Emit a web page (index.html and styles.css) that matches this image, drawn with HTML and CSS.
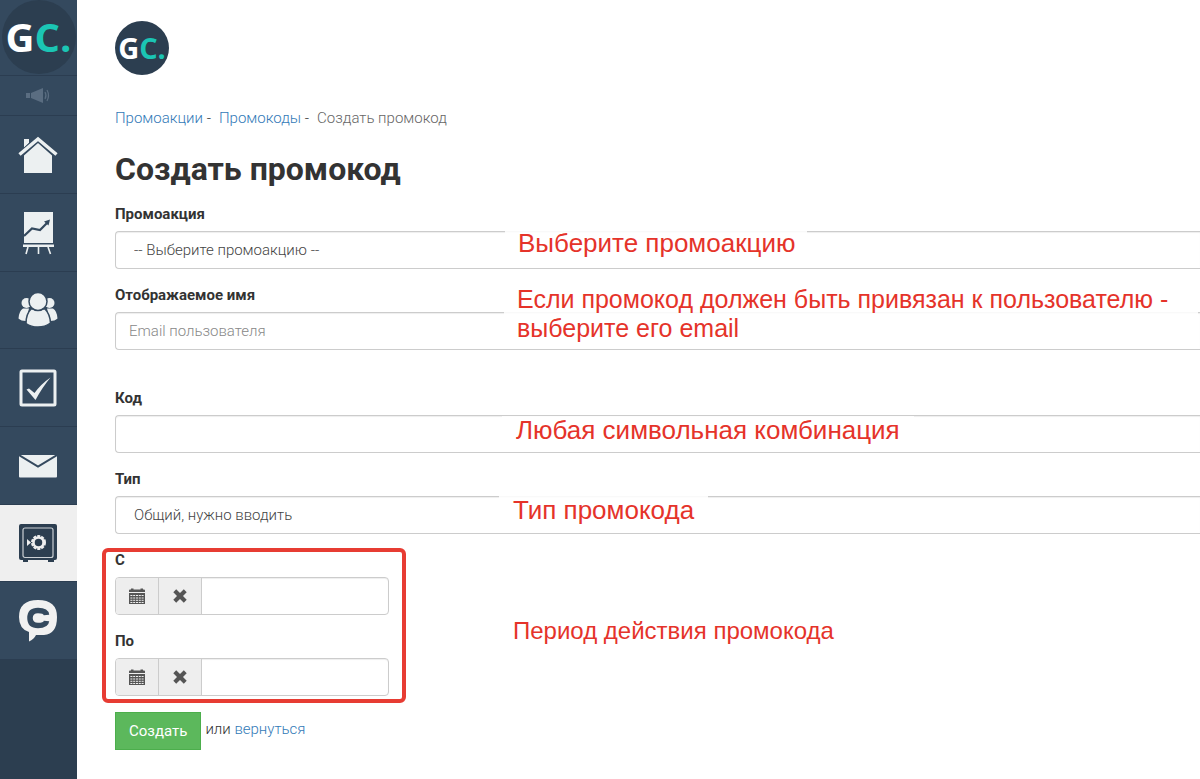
FILE: index.html
```
<!DOCTYPE html>
<html lang="ru">
<head>
<meta charset="utf-8">
<title>Создать промокод</title>
<meta name="viewport" content="width=device-width, initial-scale=1">
<link rel="stylesheet" href="styles.css">
</head>
<body>
<svg class="defs" aria-hidden="true">
  <symbol id="calendar" viewBox="0 0 16 16">
    <path fill="currentColor" d="M0 4V2.500Q0 1.500 1 1.500H2V.5H4.500V1.500H11.500V.5H14V1.500H15Q16 1.500 16 2.500V4ZM0 5H16V16H0Z"/>
    <path stroke="#eee" stroke-width="1" stroke-dasharray="2 .8" d="M1.400 7.500H15M1.400 10H15M1.400 12.300H15M1.400 14.500H15" fill="none"/>
  </symbol>
  <symbol id="cross" viewBox="0 0 14 14">
    <path fill="currentColor" d="M3.200.3 7 4 10.800.3 13.700 3.200 10 7 13.700 10.800 10.800 13.700 7 10 3.200 13.700.3 10.800 4 7 .3 3.200Z"/>
  </symbol>
</svg>
<div class="layout">
  <nav class="sidebar" aria-label="Главное меню">
    <a class="side-logo" href="#"><span class="logo logo-large">G<span class="logo-accent">C.</span></span></a>
    <a class="side-item side-small" href="#" aria-label="Новости">
      <svg width="26" height="18" viewBox="0 0 26 18" fill="#5a6d81"><rect x="1" y="6" width="4" height="5"/><path d="M6 6 18 1V16L6 11Z"/><path d="M20 5Q22 8.500 20 12M22 3Q25 8.500 22 14" fill="none" stroke="#5a6d81" stroke-width="1.200"/></svg>
    </a>
    <a class="side-item" href="#" aria-label="Главная">
      <svg width="40" height="38" viewBox="0 0 40 38"><path fill="#ecf0f1" d="M6 3h5v4l-5 5ZM6 18 20 6l14 12v19H6Z"/><path d="M2 19 20 3l18 16" fill="none" stroke="#34495e" stroke-width="6"/><path d="M1.500 18.500 20 3l18.500 15.500" fill="none" stroke="#ecf0f1" stroke-width="3.400"/></svg>
    </a>
    <a class="side-item" href="#" aria-label="Статистика">
      <svg width="32" height="44" viewBox="0 0 32 44"><path fill="#ecf0f1" d="M2 1h29v31H2ZM1 33.500h31v2.500H1Z"/><path d="M2 25 10 17.500 18 19 25 12" fill="none" stroke="#34495e" stroke-width="2.200"/><path d="m22 10.500 6-2-1.500 6Z" fill="#34495e"/><path d="m6 36-2 7M16.500 36v7M26 36l2.500 7" stroke="#ecf0f1" stroke-width="1.600"/></svg>
    </a>
    <a class="side-item side-users" href="#" aria-label="Пользователи">
      <svg width="40" height="36" viewBox="0 0 40 36" fill="#ecf0f1"><circle cx="8.500" cy="11" r="5"/><circle cx="31.500" cy="11" r="5"/><path d="M5 16.500h6L8 29Q3 29 .5 26.500 1 19 5 16.500ZM35 16.500h-6L32 29q5 0 7.500-2.500Q39 19 35 16.500Z"/><g stroke="#34495e" stroke-width="1.500"><path d="M13 17h14q5 5 5.500 14Q27 35 20 35T8 31.500Q8 22 13 17Z"/><circle cx="20" cy="9.500" r="9"/></g></svg>
    </a>
    <a class="side-item" href="#" aria-label="Задачи">
      <svg width="38" height="38" viewBox="0 0 38 38"><rect x="2" y="2" width="34" height="34" rx="1" fill="none" stroke="#ecf0f1" stroke-width="3"/><path d="M7.500 20.500 10 19.500 15.500 24Q22 15 31.500 8.500 23.500 18 16.500 31Z" fill="#ecf0f1"/></svg>
    </a>
    <a class="side-item" href="#" aria-label="Сообщения">
      <svg width="38" height="24" viewBox="0 0 38 24"><rect y="1" width="38" height="22.500" rx="1" fill="#ecf0f1"/><path d="m0 1 19 11.500L38 1" fill="none" stroke="#34495e" stroke-width="2"/></svg>
    </a>
    <a class="side-item side-active" href="#" aria-label="Продажи" aria-current="page">
      <svg width="38" height="39" viewBox="0 0 38 39"><path d="M2 0h34q2 0 2 2v32q0 2-2 2h-1v2h-6v-2H9v2H4v-2H2q-2 0-2-2V2Q0 0 2 0Z" fill="#2c3e50"/><rect x="4" y="4" width="30" height="29.500" rx="2" fill="none" stroke="#cbd0d4" stroke-width="1.200"/><circle cx="19.500" cy="18.500" r="5" fill="none" stroke="#efefef" stroke-width="2.500"/><circle cx="19.500" cy="18.500" r="6.500" fill="none" stroke="#efefef" stroke-width="2" stroke-dasharray="3 1.080"/><path d="m8 15 4 3.500L8 22Z" fill="#efefef"/></svg>
    </a>
    <a class="side-item" href="#" aria-label="Чат">
      <svg width="38" height="43" viewBox="0 0 38 43"><path d="M19 1Q38 1 38 18T25 36h-8q-2 4-7 6.500V33Q0 30 0 18 0 1 19 1Z" fill="#f1f1f1"/><path d="M27.500 16Q27 11.500 19 11.500T11 19 19 26.500 27.500 22" fill="none" stroke="#34495e" stroke-width="5.500"/></svg>
    </a>
  </nav>

  <main class="content">
    <span class="logo">G<span class="logo-accent">C.</span></span>
    <nav class="breadcrumbs" aria-label="Навигация">
      <span><a href="#">Промоакции</a> -</span>
      <span><a href="#">Промокоды</a> -</span>
      <span class="current">Создать промокод</span>
    </nav>
    <h1>Создать промокод</h1>

    <form>
      <div class="group">
        <label for="promo">Промоакция</label>
        <select class="control" id="promo"><option>-- Выберите промоакцию --</option></select>
        <p class="note note-promo">Выберите промоакцию</p>
      </div>
      <div class="group group-user">
        <label for="user">Отображаемое имя</label>
        <input class="control" id="user" type="text" placeholder="Email пользователя">
        <p class="note note-user">Если промокод должен быть привязан к пользователю - выберите его email</p>
      </div>
      <div class="group">
        <label for="code">Код</label>
        <input class="control" id="code" type="text">
        <p class="note note-code">Любая символьная комбинация</p>
      </div>
      <div class="group">
        <label for="type">Тип</label>
        <select class="control" id="type"><option>Общий, нужно вводить</option></select>
        <p class="note note-type">Тип промокода</p>
      </div>
      <div class="period">
        <div class="group">
          <label for="from">С</label>
          <div class="date">
            <button type="button" aria-label="Открыть календарь"><svg width="16" height="16"><use href="#calendar"/></svg></button>
            <button type="button" aria-label="Очистить"><svg width="14" height="14"><use href="#cross"/></svg></button>
            <input id="from" type="text">
          </div>
        </div>
        <div class="group">
          <label for="to">По</label>
          <div class="date">
            <button type="button" aria-label="Открыть календарь"><svg width="16" height="16"><use href="#calendar"/></svg></button>
            <button type="button" aria-label="Очистить"><svg width="14" height="14"><use href="#cross"/></svg></button>
            <input id="to" type="text">
          </div>
        </div>
        <p class="note note-period">Период действия промокода</p>
      </div>
      <div class="actions">
        <button class="submit" type="submit">Создать</button>
        <span>или <a href="#">вернуться</a></span>
      </div>
    </form>
  </main>
</div>
</body>
</html>
```
FILE: styles.css
```
*, *::before { box-sizing: border-box; }

body {
  margin: 0;
  background: #fff;
  color: #333;
  font: 400 15px/21px Roboto, "Noto Sans", sans-serif;
}

a { color: #337ab7; text-decoration: none; }
svg { display: block; }
.defs { position: absolute; width: 0; height: 0; }

.layout { display: flex; min-height: 100vh; }

.sidebar {
  flex: none;
  display: flex;
  flex-direction: column;
  width: 77px;
  background: #2c3e50;
}

.side-logo,
.side-item {
  display: flex;
  align-items: center;
  justify-content: center;
  height: 78px;
  background: #34495e;
  border-bottom: 1px solid #2b3d51;
}

.side-item { padding-right: 1px; }
.side-logo { height: 76px; padding-bottom: 2px; }
.side-small { height: 40px; }
.side-users { height: 77px; }
.side-active { background: #efefef; height: 77px; }

.logo {
  display: flex;
  align-items: center;
  justify-content: center;
  width: 54px;
  height: 54px;
  border-radius: 50%;
  background: #2c3e50;
  color: #fff;
  font: 700 29px/54px "Open Sans", sans-serif;
}

.logo-large { width: 74px; height: 74px; font-size: 40px; line-height: 74px; }
.logo-accent { color: #1bc5b4; }

.content { flex: 1; min-width: 0; padding: 21px 0 30px 38px; overflow: hidden; }

.breadcrumbs { display: flex; gap: 8px; margin-top: 33px; font-weight: 300; }
.breadcrumbs .current { color: #666; }

h1 { margin: 21px 0 16px; font-size: 32px; line-height: 38px; font-weight: 700; }

.group { position: relative; margin-bottom: 16px; }
.group-user { margin-bottom: 38px; }

label { display: block; width: max-content; margin-bottom: 6px; font-weight: 700; }

.control,
.date {
  display: flex;
  height: 38px;
  border: 1px solid #ccc;
  border-radius: 4px;
  background: #fff;
  box-shadow: inset 0 1px 1px rgba(0, 0, 0, .07);
}

.control {
  width: 100%;
  padding: 0 13px;
  border-right: 0;
  border-radius: 4px 0 0 4px;
  color: #444;
  font: inherit;
  font-weight: 300;
  appearance: none;
}

select.control { padding-left: 18px; }
.control::placeholder { color: #888; opacity: 1; }

.note {
  position: absolute;
  margin: 0;
  background: rgba(255, 255, 255, .88);
  color: #e5332a;
  font: 400 26px/29px "Liberation Sans", Arial, sans-serif;
}

.note-promo { left: 390px; top: 25px; padding: 0 12px 0 13px; }
.note-user { left: 389px; top: 0; width: 694px; padding: 0 0 0 13px; font-size: 25px; }
.note-code { left: 387px; top: 28px; padding: 0 14px; }
.note-type { left: 384px; top: 27px; padding: 0 14px; }
.note-period { left: 398px; top: 66px; font-size: 24px; }

.period { position: relative; }

.period::before {
  content: "";
  position: absolute;
  left: -13px;
  top: -2px;
  width: 304px;
  height: 155px;
  border: 4px solid #e73c33;
  border-radius: 6px;
  pointer-events: none;
}

.date { width: 274px; overflow: hidden; }

.date button {
  display: flex;
  align-items: center;
  justify-content: center;
  width: 43px;
  padding: 0;
  border: 0;
  border-right: 1px solid #ccc;
  background: #eee;
  color: #555;
}

.date input { flex: 1; min-width: 0; border: 0; background: none; font: inherit; }

.actions { display: flex; gap: 4px; font-weight: 300; }
.actions span { padding-top: 7px; }

.submit {
  height: 38px;
  padding: 0 13px;
  border: 1px solid #4cae4c;
  background: #5cb85c;
  color: #fff;
  font: inherit;
  font-weight: 400;
}
```
